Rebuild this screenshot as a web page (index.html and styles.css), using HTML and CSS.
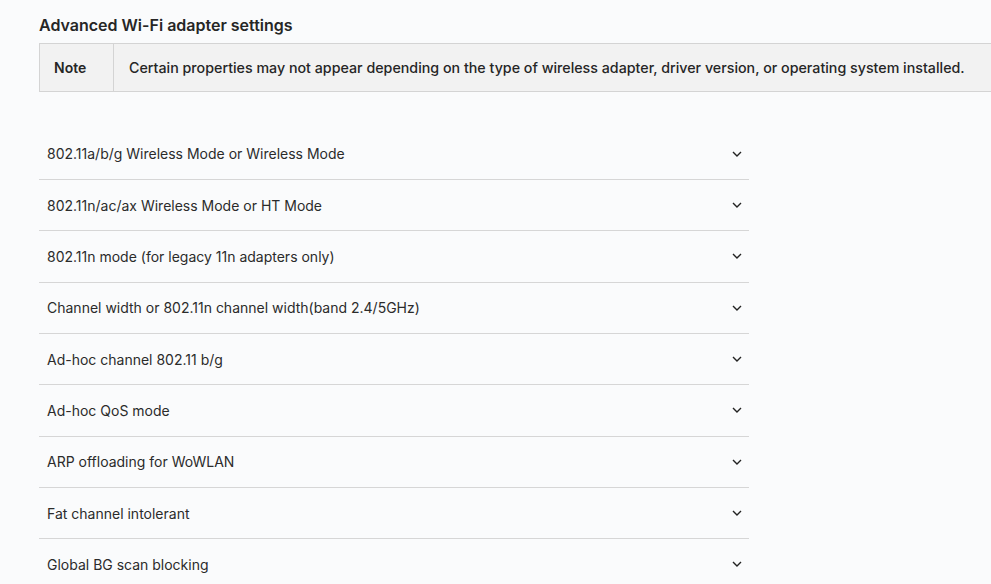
FILE: index.html
```html
<!DOCTYPE html>
<html lang="en">
<head>
<meta charset="utf-8">
<title>Advanced Wi-Fi adapter settings</title>
<link rel="stylesheet" href="styles.css">
</head>
<body>
<main class="page">
  <h2 class="title">Advanced Wi-Fi adapter settings</h2>
  <table class="note">
    <tr>
      <th class="note-label">Note</th>
      <td class="note-text">Certain properties may not appear depending on the type of wireless adapter, driver version, or operating system installed.</td>
    </tr>
  </table>
  <ul class="accordion">
    <li class="row"><span>802.11a/b/g Wireless Mode or Wireless Mode</span><svg class="chev" viewBox="0 0 10 6"><path d="M1 1l4 4 4-4"/></svg></li>
    <li class="row"><span>802.11n/ac/ax Wireless Mode or HT Mode</span><svg class="chev" viewBox="0 0 10 6"><path d="M1 1l4 4 4-4"/></svg></li>
    <li class="row"><span>802.11n mode (for legacy 11n adapters only)</span><svg class="chev" viewBox="0 0 10 6"><path d="M1 1l4 4 4-4"/></svg></li>
    <li class="row"><span>Channel width or 802.11n channel width(band 2.4/5GHz)</span><svg class="chev" viewBox="0 0 10 6"><path d="M1 1l4 4 4-4"/></svg></li>
    <li class="row"><span>Ad-hoc channel 802.11 b/g</span><svg class="chev" viewBox="0 0 10 6"><path d="M1 1l4 4 4-4"/></svg></li>
    <li class="row"><span>Ad-hoc QoS mode</span><svg class="chev" viewBox="0 0 10 6"><path d="M1 1l4 4 4-4"/></svg></li>
    <li class="row"><span>ARP offloading for WoWLAN</span><svg class="chev" viewBox="0 0 10 6"><path d="M1 1l4 4 4-4"/></svg></li>
    <li class="row"><span>Fat channel intolerant</span><svg class="chev" viewBox="0 0 10 6"><path d="M1 1l4 4 4-4"/></svg></li>
    <li class="row"><span>Global BG scan blocking</span><svg class="chev" viewBox="0 0 10 6"><path d="M1 1l4 4 4-4"/></svg></li>
  </ul>
</main>
</body>
</html>
```

FILE: styles.css
```css
html, body {
  margin: 0;
  padding: 0;
  overflow: hidden;
  background: #fafbfc;
  font-family: Inter, "Noto Sans", "Liberation Sans", sans-serif;
  color: #262626;
}
.page {
  padding: 15px 0 0 39px;
}
.title {
  margin: 0 0 8px 0;
  font-size: 16px;
  line-height: 20px;
  font-weight: 600;
  color: #262626;
}
.note {
  border-collapse: collapse;
  width: 1000px;
  background: #f2f2f2;
  border: 1px solid #d4d4d4;
}
.note-label {
  width: 74px;
  box-sizing: border-box;
  border-right: 1px solid #d4d4d4;
  text-align: left;
  padding: 0 0 0 14px;
  height: 48px;
  font-size: 14px;
  font-weight: 600;
}
.note-text {
  padding: 0 0 0 15px;
  font-size: 14.25px;
  font-weight: 500;
  white-space: nowrap;
}
.accordion {
  list-style: none;
  margin: 36.67px 0 0 0;
  padding: 0;
  width: 710px;
}
.row {
  display: flex;
  align-items: center;
  justify-content: space-between;
  height: 50.33px;
  border-bottom: 1px solid #d6d6d6;
  padding: 0 7px 0 8px;
  font-size: 14px;
  color: #2b2b2b;
}
.chev {
  width: 10px;
  height: 6px;
  fill: none;
  stroke: #222;
  stroke-width: 1.4;
}
```
